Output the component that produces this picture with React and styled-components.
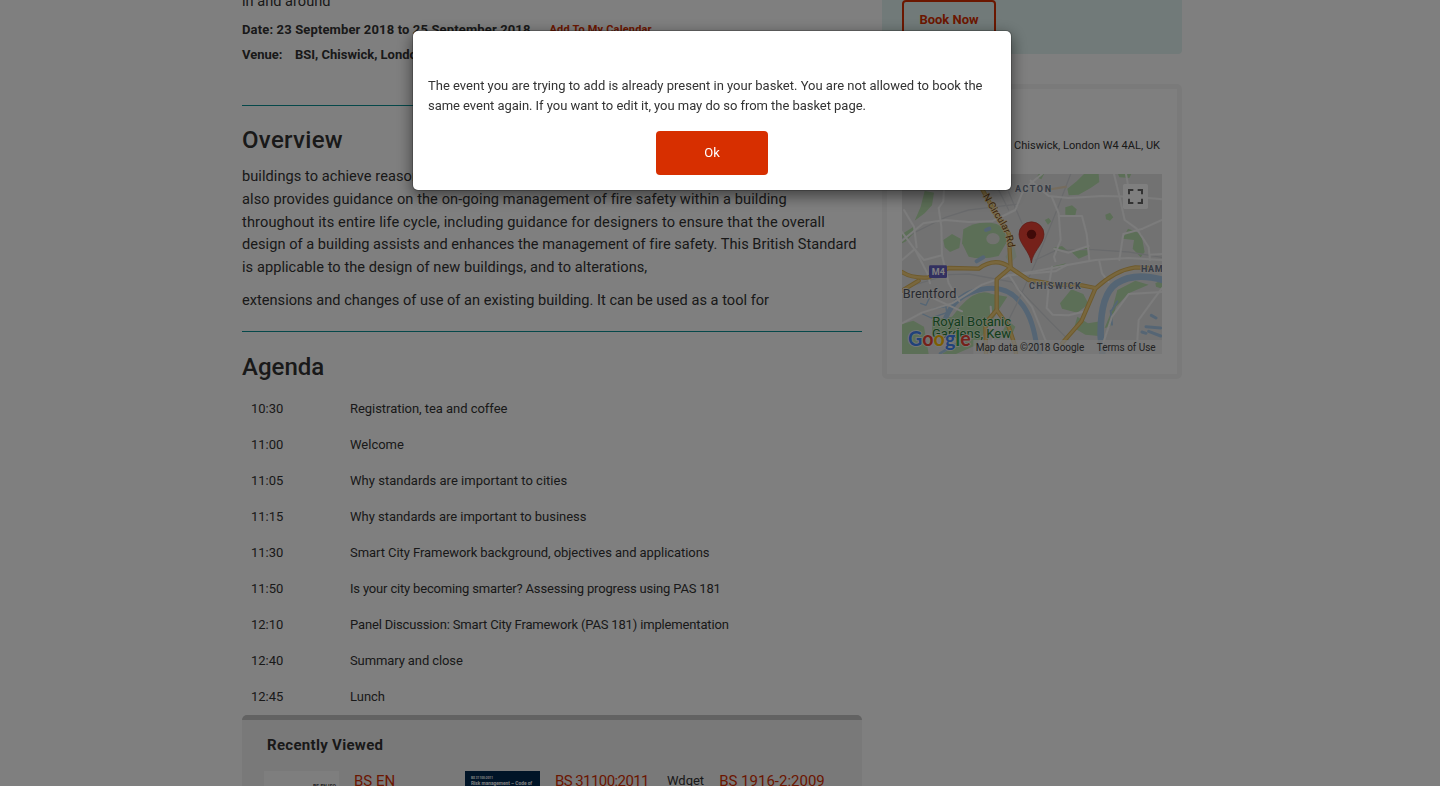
import React from "react";
import styled, { createGlobalStyle } from "styled-components";

const Global = createGlobalStyle`
  * { box-sizing: border-box; }
  html, body { margin: 0; height: 786px; overflow: hidden; background: #fff; }
  body { font-family: Roboto, "Noto Sans", sans-serif; font-size: 13px; color: #333; }
  h2, h3, p { margin: 0; font-weight: inherit; }
`;

const Page = styled.div`
  height: 786px;
  overflow: hidden;
  padding-left: 242px;
  display: flex;
  gap: 20px;
`;
const Main = styled.main`
  width: 620px;
  flex: none;
  display: flex;
  flex-direction: column;
`;
const Line = styled.span`
  display: block;
  white-space: nowrap;
  letter-spacing: ${(p) => p.$ls || 0}px;
`;
const Intro = styled.div`
  flex: none;
  margin-top: -10px;
  height: 27px;
  font-size: 14.6px;
  line-height: 23px;
`;
const Meta = styled.div`
  flex: none;
  display: flex;
  height: 25px;
  line-height: 25px;
  font-weight: 700;
`;
const Label = styled.span`
  width: 53px;
`;
const CalendarLink = styled.a`
  color: #d72f00;
  font-size: 11px;
  margin-left: 19px;
  white-space: nowrap;
  letter-spacing: ${(p) => p.$ls || 0}px;
`;
const Rule = styled.div`
  flex: none;
  height: 1px;
  background: #0a9195;
  margin-top: ${(p) => p.$top}px;
`;
const Heading = styled.h2`
  flex: none;
  font-size: 24px;
  font-weight: 500;
  line-height: 30px;
  margin-top: ${(p) => p.$top}px;
  letter-spacing: ${(p) => p.$ls || 0}px;
`;
const Paragraph = styled.p`
  flex: none;
  font-size: 14.6px;
  line-height: 22.75px;
  margin-top: ${(p) => p.$top}px;
`;
const Agenda = styled.div`
  flex: none;
  margin-top: 9px;
`;
const AgendaRow = styled.div`
  display: grid;
  grid-template-columns: 99px 1fr;
  height: 36px;
  line-height: 36px;
  padding-left: 9px;
`;
const Recent = styled.section`
  flex: none;
  height: 120px;
  background: #f2f2f2;
  border-top: 5px solid #c4c4c4;
  border-radius: 5px;
  padding: 15px 0 0 22px;
`;
const RecentTitle = styled.h3`
  font-size: 15px;
  font-weight: 700;
  line-height: 20px;
  padding-left: 3px;
  letter-spacing: ${(p) => p.$ls || 0}px;
`;
const RecentGrid = styled.div`
  margin-top: 16px;
  display: grid;
  grid-template-columns: 201px 202px 1fr;
`;
const RecentItem = styled.div`
  display: flex;
  gap: 15px;
`;
const Cover = styled.div`
  width: 75px;
  flex: none;
  height: 100px;
  background: ${(p) => (p.$dark ? "#00284f" : "#fcfcfc")};
  color: ${(p) => (p.$dark ? "#fff" : "#444")};
  font-size: ${(p) => (p.$dark ? 4.8 : 5)}px;
  line-height: 6px;
  font-weight: 700;
  white-space: nowrap;
  padding: ${(p) => (p.$dark ? "5px 6px" : "12px 3px")};
  text-align: ${(p) => (p.$dark ? "left" : "right")};
`;
const CoverCode = styled.div`
  font-size: 3.2px;
  line-height: 5px;
`;
const RecentLink = styled.a`
  color: #d72f00;
  font-size: 15px;
  line-height: 21px;
  white-space: nowrap;
  letter-spacing: ${(p) => p.$ls || 0}px;
`;
const Alt = styled.span`
  line-height: 20px;
  letter-spacing: ${(p) => p.$ls || 0}px;
`;
const Side = styled.aside`
  width: 300px;
  flex: none;
`;
const BookPanel = styled.div`
  height: 54px;
  padding-left: 20px;
  background: #e2f5f2;
  border-radius: 0 0 4px 4px;
`;
const BookButton = styled.button`
  display: block;
  width: 94px;
  height: 40px;
  padding: 0 0 2px;
  background: transparent;
  border: 2px solid #d72f00;
  border-radius: 4px;
  color: #d72f00;
  font: 700 13px Roboto, sans-serif;
  letter-spacing: ${(p) => p.$ls || 0}px;
`;
const VenueBox = styled.div`
  margin-top: 30px;
  height: 295px;
  border: 5px solid #f5f5f5;
  border-radius: 5px;
  padding: 47px 15px 0;
`;
const Address = styled.div`
  font-size: 11px;
  line-height: 20px;
  text-align: right;
  padding-right: 2px;
  letter-spacing: ${(p) => p.$ls || 0}px;
`;
const MapSvg = styled.svg`
  display: block;
  width: 260px;
  height: 180px;
  margin-top: 18px;
`;
const Backdrop = styled.div`
  position: fixed;
  inset: 0;
  background: rgba(0, 0, 0, 0.5);
  padding: 30px 0 0 412px;
`;
const Dialog = styled.div`
  width: 600px;
  height: 161px;
  background: #fff;
  background-clip: padding-box;
  border: 1px solid rgba(0, 0, 0, 0.2);
  border-radius: 6px;
  box-shadow: 0 5px 15px rgba(0, 0, 0, 0.5);
  padding: 45px 15px 0;
  display: flex;
  flex-direction: column;
  line-height: 20px;
`;
const OkButton = styled.button`
  align-self: center;
  margin-top: 15px;
  width: 112px;
  height: 44px;
  border: 0;
  padding: 0 0 2px;
  border-radius: 4px;
  background: #d72f00;
  color: #fff;
  font: 400 13px Roboto, sans-serif;
`;

const agenda = [
  ["10:30", "Registration, tea and coffee", -0.04],
  ["11:00", "Welcome", 0],
  ["11:05", "Why standards are important to cities", 0.02],
  ["11:15", "Why standards are important to business", -0.02],
  ["11:30", "Smart City Framework background, objectives and applications", -0.06],
  ["11:50", "Is your city becoming smarter? Assessing progress using PAS 181", -0.17],
  ["12:10", "Panel Discussion: Smart City Framework (PAS 181) implementation", -0.16],
  ["12:40", "Summary and close", -0.1],
  ["12:45", "Lunch", 0],
];

const overview = [
  ["buildings to achieve reasonable standards of fire safety for all people in and", 0.05],
  ["also provides guidance on the on-going management of fire safety within a building", 0.085],
  ["throughout its entire life cycle, including guidance for designers to ensure that the overall", 0.11],
  ["design of a building assists and enhances the management of fire safety. This British Standard", 0.03],
  ["is applicable to the design of new buildings, and to alterations,", 0.06],
];

const parks = [
  "M128 92L156 98L150 136L128 160L98 182L116 140Z",
  "M244 208Q290 178 344 192Q376 205 372 250L350 288Q300 300 260 290L240 250Z",
  "M184 240L210 222L236 236L232 264L204 276L188 262Z",
  "M60 222L95 200L100 215L70 245L60 250Z",
  "M556 86L584 64L606 42L650 42L652 66L626 84L590 104L560 106Z",
  "M550 142L570 136L584 148L580 166L550 164Z",
  "M670 164L684 158L694 172L684 182L672 178Z",
  "M488 180L500 174L508 184L498 194Z",
  "M708 42L748 42L742 54L712 52Z",
  "M722 236L738 206L756 212L778 222L788 276L776 292L752 266L756 240Z",
  "M512 264L540 258L560 274L622 262L618 284L590 296L564 272L518 274Z",
  "M470 42L486 42L478 58L464 52Z",
  "M534 430L568 388L604 402L620 432L586 458L540 446Z",
  "M586 470L618 490L656 484L650 528L610 524L576 504Z",
  "M668 504L690 450L706 390L760 362L800 374L740 400L702 440L684 500Z",
  "M234 440Q286 382 330 402L376 410L350 450L332 480L282 556L222 582L180 582L250 534L150 530L150 480L210 470Z",
  "M60 492L94 482L126 500L140 582L60 582Z",
  "M378 482L400 500L390 524L360 516Z",
  "M820 370L840 360L840 386L822 380Z",
  "M508 320L552 310L536 324L510 324Z",
];

const roads = [
  "M60 242L124 190L190 180L260 186L330 184L400 150L420 100L446 70L480 42",
  "M60 490L120 458L210 430L300 374L380 346L460 334L560 314L640 300L740 294L840 300",
  "M60 216L98 268L126 300L180 286",
  "M98 268L60 300M100 270L136 340L144 370",
  "M186 90L184 124L170 144L178 200L180 286L200 370L232 424",
  "M66 150L96 200L104 262",
  "M446 62L500 108L560 114L660 108L760 110L840 118",
  "M510 112L530 160L536 240L516 290L520 304",
  "M530 168L600 168L614 222L622 300",
  "M516 266L560 278L620 258",
  "M696 42L712 108L728 180L764 206L800 262L804 300",
  "M712 300L724 222L782 206L840 180",
  "M732 42L740 86L736 110",
  "M804 284L840 282",
  "M510 320L500 380L494 444L512 464L560 466L610 454",
  "M382 346L410 390L450 440L490 540L500 560",
  "M652 304L660 340L680 366",
  "M552 316L520 334L380 346",
  "M660 560L690 470L740 402L840 396",
  "M766 540L770 480L806 430L840 384",
  "M326 440L336 582M60 400L130 404L240 454",
];

const mainRoads = [
  "M60 336Q90 356 140 352L200 324L290 326Q340 290 384 322L440 360L520 374L600 376L640 384",
  "M300 86L340 160L380 220L386 322L344 358L344 450L380 500L400 560L402 582",
  "M540 550L598 484L640 386Q700 330 760 322L800 324",
  "M344 450L310 490L312 582M60 392L110 362",
];

function VenueMap() {
  const soft = { fill: "none", strokeLinejoin: "round", strokeLinecap: "round" };
  return (
    <MapSvg viewBox="60 42 780 540" fontFamily="Roboto, sans-serif">
      <rect x="60" y="42" width="780" height="540" fill="#e5e5e5" />
      {parks.map((d) => <path key={d} d={d} fill="#b9deae" />)}
      <ellipse cx="333" cy="236" rx="20" ry="17" fill="#e2e5de" />
      <path d="M370 290L396 256L404 290L384 312Z" fill="#d5e5d0" />
      <g {...soft} stroke="#aacbe8">
        <path d="M190 476Q220 402 300 388Q372 374 414 426Q448 462 462 544L476 590" strokeWidth="15" />
        <path d="M662 590L656 528Q654 404 704 370Q758 334 850 362" strokeWidth="20" />
        <path d="M126 392L146 406L132 436L116 430M122 462L148 474L194 458L192 440L154 446" strokeWidth="4" />
        <path d="M284 304L304 292M312 210L322 206" strokeWidth="12" />
        <path d="M808 466L822 474M792 500L836 504M800 514L836 528M780 516L792 520" strokeWidth="9" />
        <path d="M174 580L250 536" strokeWidth="8" />
        <path d="M686 452L690 494M690 450L706 424" strokeWidth="6" />
      </g>
      <g {...soft} stroke="#d3d5d8" strokeWidth="4">
        <path d="M60 236L190 172L260 150L410 132" />
        <path d="M60 386L200 344L260 342L390 366L500 480L560 540" />
        <path d="M350 90L380 150M380 96L420 190M566 42L528 142L460 310L400 440L370 500" />
        <path d="M460 300L520 272L620 268L740 276L840 292" />
      </g>
      <g {...soft} stroke="#f8f8f8" strokeWidth="6">
        {roads.map((d) => <path key={d} d={d} />)}
      </g>
      <g {...soft} stroke="#dcb45a" strokeWidth="13">
        {mainRoads.map((d) => <path key={d} d={d} />)}
      </g>
      <g {...soft} stroke="#f3cf7a" strokeWidth="7">
        {mainRoads.map((d) => <path key={d} d={d} />)}
      </g>
      <path d="M504 88L554 80" stroke="#ead9bd" strokeWidth="7" />

      <path id="circular-road" d="M302 108L334 164Q374 212 380 275" fill="none" />
      <text fontSize="30" fill="#7a4a16" stroke="#f5e3b4" strokeWidth="4" paintOrder="stroke">
        <textPath href="#circular-road">N Circular Rd</textPath>
      </text>
      <g fill="#6b7689" stroke="#eee" strokeWidth="4" paintOrder="stroke" fontSize="27" fontWeight="700">
        <text x="399" y="96" textLength="108">ACTON</text>
        <text x="441" y="387" textLength="155">CHISWICK</text>
        <text x="777" y="336" letterSpacing="2">HAMMERSMITH</text>
      </g>
      <rect x="141" y="316" width="54" height="38" rx="4" fill="#6560c0" />
      <text x="149" y="346" fontSize="27" fontWeight="700" fill="#fff" textLength="40">M4</text>
      <text x="62" y="413" fontSize="38" fill="#50535e" stroke="#eee" strokeWidth="4" paintOrder="stroke" textLength="161">Brentford</text>
      <g fill="#267a36" stroke="#e0efdc" strokeWidth="4" paintOrder="stroke" fontSize="39">
        <text x="151" y="497" textLength="236">Royal Botanic</text>
        <text x="150" y="535" textLength="237">Gardens, Kew</text>
      </g>

      <rect x="274" y="540" width="566" height="42" fill="#f5f5f5" opacity="0.7" />
      <g fill="#444" fontSize="30">
        <text x="281" y="573" textLength="326">Map data ©2018 Google</text>
        <text x="644" y="573" textLength="177">Terms of Use</text>
      </g>
      <text x="78" y="559" fontSize="60" fontFamily="Lato, sans-serif" fontWeight="700" stroke="#f2f2f2" strokeWidth="5" paintOrder="stroke" textLength="188" lengthAdjust="spacingAndGlyphs">
        <tspan fill="#4285f4">G</tspan><tspan fill="#ea4335">o</tspan><tspan fill="#fbbc05">o</tspan><tspan fill="#4285f4">g</tspan><tspan fill="#34a853">l</tspan><tspan fill="#ea4335">e</tspan>
      </text>

      <path d="M448 309C444 274 411 252 411 223A37.500 37.500 0 0 1 486 223C486 252 452 274 448 309Z" fill="#ea4335" stroke="#b83227" strokeWidth="2" />
      <circle cx="448.500" cy="223" r="14" fill="#811411" />
      <rect x="723" y="72" width="75" height="75" rx="5" fill="#fff" />
      <path d="M741 103V90H754M767 90H780V103M780 116V129H767M754 129H741V116" fill="none" stroke="#666" strokeWidth="6" />
    </MapSvg>
  );
}

export default function App() {
  return (
    <>
      <Global />
      <Page>
        <Main>
          <Intro><Line>in and around</Line></Intro>
          <Meta>
            <Line $ls={0.14}>Date: 23 September 2018 to 25 September 2018</Line>
            <CalendarLink $ls={0.17}>Add To My Calendar</CalendarLink>
          </Meta>
          <Meta><Label>Venue:</Label><Line>BSI, Chiswick, London W4 4AL</Line></Meta>
          <Rule $top={38} />
          <Heading $top={19} $ls={0.3}>Overview</Heading>
          <Paragraph $top={10}>
            {overview.map(([text, ls]) => <Line key={text} $ls={ls}>{text}</Line>)}
          </Paragraph>
          <Paragraph $top={10}>
            <Line $ls={0.01}>extensions and changes of use of an existing building. It can be used as a tool for</Line>
          </Paragraph>
          <Rule $top={19} />
          <Heading $top={20}>Agenda</Heading>
          <Agenda>
            {agenda.map(([time, title, ls]) => (
              <AgendaRow key={time}><Line>{time}</Line><Line $ls={ls}>{title}</Line></AgendaRow>
            ))}
          </Agenda>
          <Recent>
            <RecentTitle $ls={0.3}>Recently Viewed</RecentTitle>
            <RecentGrid>
              <RecentItem><Cover>BS EN ISO</Cover><RecentLink>BS EN</RecentLink></RecentItem>
              <RecentItem>
                <Cover $dark><CoverCode>BS 31100:2011</CoverCode>Risk management – Code of</Cover>
                <RecentLink $ls={-0.58}>BS 31100:2011</RecentLink>
              </RecentItem>
              <RecentItem><Alt>Wdget</Alt><RecentLink>BS 1916-2:2009</RecentLink></RecentItem>
            </RecentGrid>
          </Recent>
        </Main>
        <Side>
          <BookPanel><BookButton>Book Now</BookButton></BookPanel>
          <VenueBox>
            <Address $ls={0.03}>Chiswick, London W4 4AL, UK</Address>
            <VenueMap />
          </VenueBox>
        </Side>
      </Page>
      <Backdrop>
        <Dialog role="dialog">
          <Line>The event you are trying to add is already present in your basket. You are not allowed to book the</Line>
          <Line $ls={-0.04}>same event again. If you want to edit it, you may do so from the basket page.</Line>
          <OkButton>Ok</OkButton>
        </Dialog>
      </Backdrop>
    </>
  );
}
